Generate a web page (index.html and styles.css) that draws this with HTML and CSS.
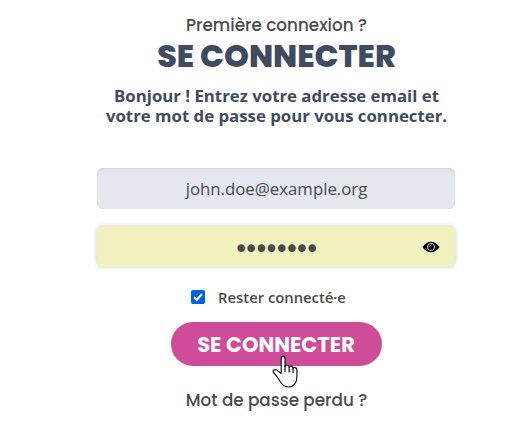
FILE: index.html
```
<!DOCTYPE html>
<html lang="fr">
<head>
    <meta charset="UTF-8">
    <meta name="viewport" content="width=device-width, initial-scale=1.0">
    <title>Se connecter</title>
    <link rel="stylesheet" href="styles.css">
</head>
<body>

    <div class="login">
        <a class="link" href="#">Première connexion ?</a>
        <h1>SE CONNECTER</h1>
        <p class="intro">Bonjour ! Entrez votre adresse email et<br>votre mot de passe pour vous connecter.</p>

        <form class="login-form">
            <input class="field" type="email" name="email" value="john.doe@example.org">

            <div class="password">
                <input class="field active" type="password" name="password" value="password">
                <svg class="eye" viewBox="0 0 18 12" width="18" height="12">
                    <path d="M0.5 6C3 2.3 5.8 0.7 9 0.7S15 2.3 17.5 6C15 9.7 12.2 11.3 9 11.3S3 9.7 0.5 6Z"/>
                    <circle cx="9" cy="6" r="3.6" fill="none" stroke="#f2f1c0" stroke-width="0.9"/>
                    <path d="M7.3 6A1.8 1.8 0 0 1 9 4.2" fill="none" stroke="#f2f1c0" stroke-width="0.5"/>
                </svg>
            </div>

            <label class="remember">
                <input type="checkbox" checked>
                <span class="box">
                    <svg viewBox="0 0 14 14" width="14" height="14">
                        <path d="M3 7.3L5.7 10L11 4" fill="none" stroke="#fff" stroke-width="2"/>
                    </svg>
                </span>
                <span class="remember-text">Rester connecté·e</span>
            </label>

            <button type="button">SE CONNECTER</button>
        </form>

        <a class="link lost" href="#">Mot de passe perdu ?</a>
    </div>

    <svg class="cursor" viewBox="0 0 26 33" width="26" height="33">
        <path d="M9.2 18.5V3.4C9.2 0.4 13 0.4 13 3.4V11.3C13.3 9.4 17.1 9.5 17.1 12.2C17.6 10.5 21.1 10.7 21.1 13.3C21.8 11.9 24.9 12.4 24.9 15V22C24.9 28 21.5 32 16.5 32C11.5 32 9.5 29 7.8 26C6.3 23.3 4.3 20.5 1.5 17.5C0 15.5 2.8 13.8 4.8 15.1L9.2 18.5Z" fill="#fff" stroke="#15152b" stroke-width="1.2" stroke-linejoin="round"/>
        <path d="M13 11V16.5M17.1 12.2V17M21.1 13.3V17.5" fill="none" stroke="#15152b" stroke-width="1.2" stroke-linecap="round"/>
    </svg>

</body>
</html>
```

FILE: styles.css
```
*
{
    box-sizing: border-box;
}
body{
    margin: 0;
    background: white;
    color: #4a4a4a;
    font-family: "Open Sans", "Noto Sans", sans-serif;
}
.login
{
    width: 359px;
    margin-left: 97px;
    padding-top: 13px;
    display: flex;
    flex-direction: column;
    align-items: center;
    text-align: center;
}
.link
{
    color: #4a4a4a;
    font-family: Poppins, Inter, sans-serif;
    font-size: 16.8px;
    font-weight: 500;
    line-height: 24px;
    text-decoration: none;
    white-space: nowrap;
}
.lost
{
    margin-top: 22px;
}
h1
{
    margin: 0;
    color: #3f4b5f;
    font-family: Poppins, Inter, sans-serif;
    font-size: 31.6px;
    font-weight: 800;
    line-height: 38px;
    white-space: nowrap;
}
.intro
{
    margin: 11px 0 0;
    color: #3f4b5f;
    font-size: 16.8px;
    font-weight: 700;
    line-height: 20px;
    white-space: nowrap;
}
.login-form
{
    align-self: flex-start;
    width: 358px;
    margin-top: 42px;
    display: flex;
    flex-direction: column;
    align-items: center;
}
.field
{
    display: block;
    width: 100%;
    height: 41px;
    padding: 1px 0 1px 1px;
    border: none;
    border-radius: 6px;
    background: #e5e8ef;
    box-shadow: inset 0 1px 2px #0a0a0a1a;
    color: #4a4a4a;
    font-family: "Open Sans", "Noto Sans", sans-serif;
    font-size: 16.8px;
    text-align: center;
    outline: none;
}
.password
{
    position: relative;
    width: 100%;
    margin-top: 17px;
}
.active
{
    padding: 6px 4px 1px 0;
    background: #f2f1c0;
    box-shadow: 0 0 5px #cacaca;
    font-family: "DejaVu Sans", sans-serif;
    font-size: 26px;
    letter-spacing: -5.2px;
}
.eye
{
    position: absolute;
    top: 15px;
    right: 15px;
}
.remember
{
    margin: 20px 15px 0 0;
    display: flex;
    align-items: center;
    gap: 13px;
    font-size: 14.8px;
    font-weight: 600;
    line-height: 20px;
}
.remember input
{
    display: none;
}
.box
{
    width: 14px;
    height: 14px;
    border-radius: 2px;
    background: #0060df;
}
.box svg
{
    display: block;
}
button
{
    width: 211px;
    height: 44px;
    margin-top: 15px;
    padding: 0;
    border: none;
    border-radius: 22px;
    background: #cf4c98;
    color: #fefefe;
    font-family: Poppins, Inter, sans-serif;
    font-size: 21px;
    font-weight: 700;
    white-space: nowrap;
    cursor: pointer;
}
.cursor
{
    position: absolute;
    left: 271.5px;
    top: 355px;
}
```
